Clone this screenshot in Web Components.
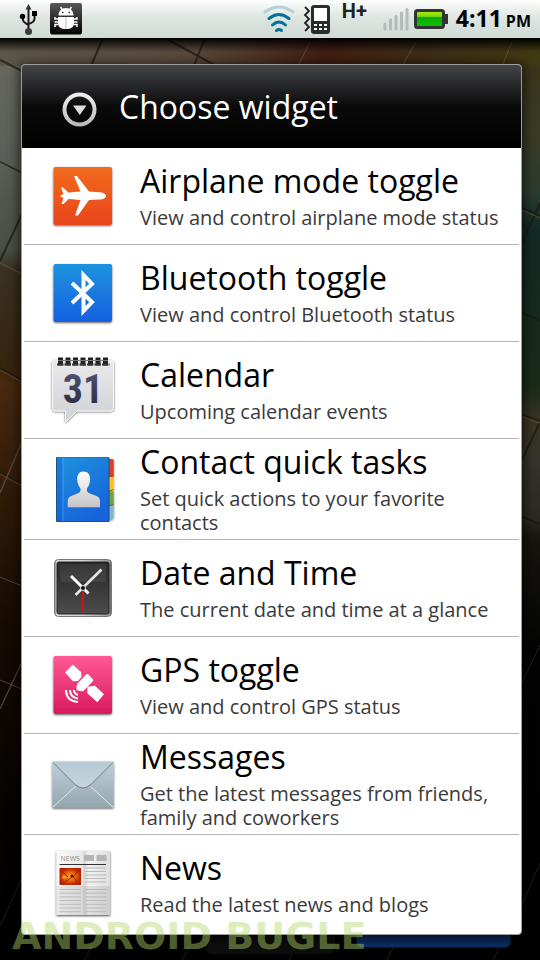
<!DOCTYPE html>
<html lang="en">
<head>
<meta charset="utf-8">
<meta name="viewport" content="width=device-width, initial-scale=1">
<title>Choose widget</title>
<style>
html{background:#000}
body{margin:0;font-family:"Open Sans","Noto Sans",sans-serif;color:#000}
</style>
</head>
<body>
<phone-screen>
  <status-bar slot="status" time="4:11" period="PM"></status-bar>
  <choice-dialog heading="Choose widget">
    <widget-row icon="airplane" label="Airplane mode toggle">View and control airplane mode status</widget-row>
    <widget-row icon="bluetooth" label="Bluetooth toggle">View and control Bluetooth status</widget-row>
    <widget-row icon="calendar" label="Calendar">Upcoming calendar events</widget-row>
    <widget-row icon="contacts" label="Contact quick tasks">Set quick actions to your favorite contacts</widget-row>
    <widget-row icon="clock" label="Date and Time">The current date and time at a glance</widget-row>
    <widget-row icon="gps" label="GPS toggle">View and control GPS status</widget-row>
    <widget-row icon="messages" label="Messages">Get the latest messages from friends, family and coworkers</widget-row>
    <widget-row icon="news" label="News">Read the latest news and blogs</widget-row>
  </choice-dialog>
  <span slot="mark">ANDROID BUGLE</span>
</phone-screen>
<script>
const tile = (a, b, body) => `<defs><linearGradient id="g" x2="0" y2="1"><stop stop-color="${a}"/><stop offset="1" stop-color="${b}"/></linearGradient><filter id="s" x="-20%" y="-20%" width="140%" height="140%"><feDropShadow dx="0" dy="1" stdDeviation="1" flood-opacity=".6"/></filter></defs><rect x="6.500" y="7" width="58.500" height="58" rx="2" fill="url(#g)" filter="url(#s)"/>${body}`;
const newsLines = () => {
  let d = '';
  for (let y = 21; y < 38; y += 3.5) d += `M38 ${y}H59`;
  for (let y = 42.5; y < 66; y += 3.7) d += `M12.500 ${y}H34M38 ${y}H59`;
  return d;
};
const ICONS = {
  airplane: tile('#f26a1b', '#e8451a', `<path fill="#fff" d="M59 36c0 2-3 3.500-7 3.500L42 40 31 55.500h-3L33.500 40l-12-1-5 5h-2l2-6-3-1.500v-1l3-1.500-2.500-6.500h2l5.500 5 12-1L27 16h3l12 15.500 10 .8c4 0 7 1.700 7 3.700z"/>`),
  bluetooth: tile('#1f93df', '#1560e0', `<path fill="none" stroke="#fff" stroke-width="4" d="M25 26l20 19-8.500 9V18L45 27 25 46"/>`),
  gps: tile('#ff5a93', '#d8195f', `<g fill="#fff"><path d="M18 23.500l7.700-8 8.300 7.500.5 5-3.500 4-5 .2zM30.500 34.500l9-9.200q1-.6 2 .3l4.300 4.600q.7 1 0 2L36.500 42q-1 .6-2 .2l-4.800-.9q-1-3 .8-6.800zM40.500 37.800l7.500-1.100 9 8.600-6.700 8-10-9z"/></g><g fill="none" stroke="#fff" stroke-width="2"><path d="M27 41c.2 3 1.500 4.500 4 4.800M23 41c.2 5 3 8 8 8.500M19 41c.2 7.500 4.500 11.500 12 12"/></g>`),
  calendar: `<defs><linearGradient id="g" x2="0" y2="1"><stop stop-color="#e9e9eb"/><stop offset="1" stop-color="#cfd1d4"/></linearGradient><linearGradient id="t" x2="0" y2="1"><stop stop-color="#55587a"/><stop offset="1" stop-color="#23263a"/></linearGradient><filter id="s" x="-20%" y="-20%" width="140%" height="140%"><feDropShadow dx="0" dy="0.500" stdDeviation=".8" flood-opacity=".65"/></filter></defs>
    <path d="M8 7h56q2.500 0 2.500 2.500v45q0 2.500-2.500 2.500H30L18.500 68V57H8q-2.500 0-2.500-2.500v-45Q5.500 7 8 7z" fill="url(#g)" stroke="#f8f8f8" filter="url(#s)"/>
    <path d="M13.500 3.500v8M21 3.500v8M28.500 3.500v8M36 3.500v8M43.500 3.500v8M51 3.500v8M58.500 3.500v8" stroke="#222" stroke-width="5"/><path d="M11 6.500h50" stroke="#777"/><path d="M10 10.500h53" stroke="#333" stroke-width="2" stroke-dasharray="6.500 1"/>
    <text x="36" y="49" text-anchor="middle" font-family="Roboto Condensed,Roboto,sans-serif" font-weight="700" font-size="40" fill="url(#t)">31</text>`,
  contacts: `<defs><linearGradient id="g" x1="0" y1="0" x2=".6" y2="1"><stop stop-color="#1f93dd"/><stop offset="1" stop-color="#1763dc"/></linearGradient><linearGradient id="p" x2="0" y2="1"><stop stop-color="#fff"/><stop offset="1" stop-color="#c4c4c6"/></linearGradient><filter id="s" x="-20%" y="-20%" width="140%" height="140%"><feDropShadow dx="0" dy="0.500" stdDeviation="1" flood-opacity=".5"/></filter></defs>
    <g filter="url(#s)"><path fill="#e63a1e" d="M60 6h5q1.700 0 1.700 2v16H60z"/><path fill="#fbc31c" d="M60 24h6.700v14.500H60z"/><path fill="#6da544" d="M60 38.500h6.700V53H60z"/><path fill="#7fb6d0" d="M60 53h6.700v12l-2 2H60z"/></g>
    <path d="M62 24l4.500-2M62 38.500l4.500-2M62 53l4.500-2" stroke="#8a5a20"/>
    <path fill="url(#g)" stroke="#1c5378" d="M9.500 4.500h52.500v64H9.500z"/><path d="M9.500 4.500h52.500" stroke="#47734d"/><path fill="#1453dd" opacity=".35" d="M10 5h5.500v63H10z"/><path d="M16 5v63" stroke="#4ab3e8" opacity=".6"/>
    <path fill="url(#p)" d="M36.500 18.500c4.500 0 6.800 3.500 6.600 8-.2 4-1.500 7-3.100 9-.5 2.500.3 4 3 5l6.500 2.500c3 1 3.500 3 3.500 6v5.300H20.700V49c0-3 .8-5 3.500-6l6.300-2.500c2.500-1 3.500-2.500 3-5-1.600-2-3.100-5-3.300-9-.2-4.500 2-8 6.300-8z"/>`,
  clock: `<defs><linearGradient id="f"><stop stop-color="#777"/><stop offset=".04" stop-color="#ddd"/><stop offset=".5" stop-color="#d5d5d5"/><stop offset=".96" stop-color="#999"/><stop offset="1" stop-color="#555"/></linearGradient><linearGradient id="g" x2="0" y2="1"><stop stop-color="#262626"/><stop offset="1" stop-color="#4c4c4c"/></linearGradient></defs>
    <rect x="7.500" y="7.500" width="57" height="57" rx="4" fill="url(#f)" stroke="#777"/><rect x="10" y="10" width="52" height="52" rx="2" fill="url(#g)" stroke="#222"/>
    <path d="M12 12h48l-2 18H14z" fill="#fff" opacity=".08"/>
    <path d="M24 24l17.500 17.500" stroke="#fff" stroke-width="3"/><path d="M54.500 17.500L28.500 43" stroke="#e8e8e8" stroke-width="2.500"/><path d="M36 36v23.500" stroke="#d80f0f" stroke-width="2"/><circle cx="36" cy="36" r="2.500" fill="#111" stroke="#ddd"/>`,
  messages: `<defs><linearGradient id="g" x2="0" y2="1"><stop stop-color="#bdcfd9"/><stop offset="1" stop-color="#94a7b1"/></linearGradient><linearGradient id="h" x2="0" y2="1"><stop stop-color="#b7cad7"/><stop offset="1" stop-color="#c6d3db"/></linearGradient><filter id="s" x="-20%" y="-20%" width="140%" height="150%"><feDropShadow dx="0" dy="1" stdDeviation="1.200" flood-opacity=".75"/></filter></defs>
    <rect x="5.500" y="13.500" width="61" height="46" fill="url(#g)" filter="url(#s)"/><path d="M6 59l23-21M66 59L43 38" stroke="#e1e9ed"/><path d="M6 14l22 22q8 7 16 0L66 14z" fill="url(#h)"/><path d="M6 14.500l22 22q8 7 16 0l22-22" fill="none" stroke="#71818c"/>`,
  news: `<defs><linearGradient id="g"><stop stop-color="#fafafa"/><stop offset=".49" stop-color="#e8e8e8"/><stop offset=".51" stop-color="#d3d3d3"/><stop offset=".6" stop-color="#f2f2f2"/><stop offset="1" stop-color="#dedede"/></linearGradient><radialGradient id="r"><stop stop-color="#ffb020"/><stop offset=".5" stop-color="#e86708"/><stop offset="1" stop-color="#b82204"/></radialGradient><filter id="s" x="-20%" y="-20%" width="140%" height="140%"><feDropShadow dx="0" dy="1" stdDeviation="1.200" flood-opacity=".7"/></filter></defs>
    <rect x="9.500" y="4" width="53.500" height="64" fill="url(#g)" filter="url(#s)"/><path d="M9.500 39H63v29H9.500z" opacity=".07"/>
    <text x="13.500" y="14" font-family="Open Sans,sans-serif" font-size="7" fill="#888">NEWS</text>
    <path fill="#b5b5b5" d="M37 8h10v6H37zM49.500 8h10v6h-10z"/><path d="M12.500 17.500H59" stroke="#333"/><path d="${newsLines()}" stroke="#b9b9b9"/>
    <path fill="url(#r)" d="M12.500 21H34v17H12.500z"/><path d="M15 24l6 6M31 24l-5 6M18 35l7-5M30 35l-4-6" stroke="#9a2404"/><circle cx="25" cy="29" r="1.500" fill="#500"/><circle cx="17" cy="30" r="1.500" fill="#ffb53a"/>`
};

class WidgetIcon extends HTMLElement {
  connectedCallback() {
    this.attachShadow({mode: 'open'}).innerHTML = `<style>:host{display:block;width:72px;height:72px;flex:none}svg{display:block;width:100%;height:100%}</style><svg viewBox="0 0 72 72" aria-hidden="true">${ICONS[this.getAttribute('name')]}</svg>`;
  }
}

class WidgetRow extends HTMLElement {
  connectedCallback() {
    this.attachShadow({mode: 'open'}).innerHTML = `<style>
      :host{display:block;border-bottom:1px solid #b4b4b4}
      :host(:last-child){border-bottom:0}
      button{box-sizing:border-box;display:flex;align-items:center;gap:21px;width:100%;min-height:96px;padding:0 12px 0 23px;border:0;background:none;font:inherit;color:inherit;text-align:left;cursor:pointer}
      .text{display:block;min-width:0;padding:8px 0 4px}
      .label{display:block;font-size:32px;line-height:30px}
      .note{display:block;margin-top:10px;font-size:20px;line-height:24px;color:#3a3a3a}
    </style><button type="button"><widget-icon name="${this.getAttribute('icon')}"></widget-icon><span class="text"><span class="label">${this.getAttribute('label')}</span><span class="note"><slot></slot></span></span></button>`;
  }
}

class ChoiceDialog extends HTMLElement {
  connectedCallback() {
    this.attachShadow({mode: 'open'}).innerHTML = `<style>
      :host{display:block;border:1px solid #9b9c9c;border-radius:4px;background:#fff;overflow:hidden;box-shadow:0 2px 12px 2px rgba(0,0,0,.65)}
      header{display:flex;align-items:center;gap:21px;height:83px;padding-left:39px;background:linear-gradient(#434447,#0a0a0a 50%,#000);color:#fff}
      header svg{flex:none;width:37px;height:37px;margin-top:6px}
      h1{margin:0;font-size:32px;line-height:40px;font-weight:400}
      .list{padding:0 2px 3px}
    </style><header><svg viewBox="0 0 37 37" aria-hidden="true"><defs><linearGradient id="g" x2="0" y2="1"><stop stop-color="#eee"/><stop offset="1" stop-color="#bbb"/></linearGradient></defs><circle cx="18.500" cy="18.500" r="15" fill="none" stroke="url(#g)" stroke-width="4"/><path fill="#ddd" d="M12 14.500h13.500l-6.700 9.500z"/></svg><h1>${this.getAttribute('heading')}</h1></header><div class="list"><slot></slot></div>`;
  }
}

class StatusBar extends HTMLElement {
  connectedCallback() {
    this.attachShadow({mode: 'open'}).innerHTML = `<style>
      :host{display:flex;align-items:center;box-sizing:border-box;height:38px;padding:0 9px 0 19px;background:linear-gradient(#fdfefd,#dfe6e2 45%,#cfdad5);color:#111}
      svg{display:block;height:38px;flex:none}
      .left,.right{display:flex;align-items:center}
      .left{gap:11px}.right{margin-left:auto}
      .vib{margin-left:8px}.net{align-self:flex-start;margin:0 16px 0 11px;font:700 20px/24px Roboto,sans-serif;color:#222}
      .bat{margin:0 8px 0 5px}
      time{font-weight:700;font-size:23px;line-height:38px;color:#000}
      small{font-size:16px;margin-left:4px}
    </style>
    <div class="left">
      <svg width="20" viewBox="0 0 20 38" aria-label="USB"><g fill="none" stroke="#1c1c1c" stroke-width="2"><path d="M9.500 8v22M4 17v3q0 2 5.500 5M15.500 15v4q0 3-6 5"/></g><path d="M6.500 9.500L9.500 4l3 5.500z" fill="#333"/><circle cx="3.500" cy="16.500" r="2.700"/><path d="M13 11h5v5h-5z"/><circle cx="9.500" cy="31.500" r="3.500" fill="#3b3b3b"/></svg>
      <svg width="32" viewBox="0 0 32 38" aria-label="Debugging"><defs><linearGradient id="k" x2="0" y2="1"><stop stop-color="#585858"/><stop offset="1"/></linearGradient></defs><rect y="3" width="32" height="31.500" rx="2" fill="url(#k)"/><g fill="#fff"><path d="M8.500 15.500c0-4.500 3-7.500 7.500-7.500s7.500 3 7.500 7.500z"/><path d="M8 17h16v6c0 4-3 6-8 6s-8-2-8-6z"/></g><path d="M10.500 7l2 3M21.500 7l-2 3M8 19H5v-2M8 22H4.500M8 24.500H5V27M24 19h3v-2M24 22h3.500M24 24.500h3V27" fill="none" stroke="#fff" stroke-width="1.500"/><path d="M16 17v12" stroke="#bbb"/><path d="M12 12.500h1.500M18.500 12.500H20" stroke="#333" stroke-width="1.500"/></svg>
    </div>
    <div class="right">
      <svg width="32" viewBox="0 0 32 38" aria-label="Wi-Fi"><g fill="none" stroke="#04719b" stroke-width="3" stroke-linecap="round"><path d="M2 12q14-10 28 0" stroke="#b5d0d8"/><path d="M6 18.500q10-8 20 0M9.500 25q6.500-6 13 0M13.500 30.500q2.500-2 5 0"/></g></svg>
      <svg class="vib" width="28" viewBox="0 0 28 38" aria-label="Vibrate"><path d="M2 7l4 4-4 4 4 4-4 4 4 4-4 4" fill="none" stroke="#222" stroke-width="1.800"/><rect x="8" y="5" width="19" height="29" rx="3" fill="#2b2b2b"/><path fill="#fff" d="M11 8h13v13H11zM11 24h3v2h-3zM16 24h3v2h-3zM21 24h3v2h-3zM11 28h3v2h-3zM16 28h3v2h-3zM21 28h3v2h-3z"/></svg>
      <span class="net">H+</span>
      <svg width="26" viewBox="0 0 26 38" aria-label="Signal"><path d="M2 29v-5M7.500 29v-9M13 29V16.500M18.500 29V13M24 29V9.500" stroke="#b3bab7" stroke-width="3" stroke-linecap="round"/></svg>
      <svg class="bat" width="34" viewBox="0 0 34 38" aria-label="Battery"><defs><linearGradient id="b" x2="0" y2="1"><stop stop-color="#b4ef10"/><stop offset=".35" stop-color="#7bd800"/><stop offset=".4" stop-color="#07a800"/><stop offset="1" stop-color="#12c400"/></linearGradient></defs><rect x="1.500" y="10.500" width="28" height="17" rx="2" fill="url(#b)" stroke="#333" stroke-width="3"/><path fill="#333" d="M31 14h3v10h-3z"/></svg>
      <time>${this.getAttribute('time')}<small>${this.getAttribute('period')}</small></time>
    </div>`;
  }
}

class TiledWallpaper extends HTMLElement {
  connectedCallback() {
    this.attachShadow({mode: 'open'}).innerHTML = `<style>:host{display:block;overflow:hidden}svg{display:block;width:100%;height:100%}</style>
    <svg viewBox="0 0 540 960" preserveAspectRatio="none" aria-hidden="true">
      <defs>
        <linearGradient id="top"><stop stop-color="#5b5648"/><stop offset=".35" stop-color="#5a4a3d"/><stop offset=".6" stop-color="#401e12"/><stop offset=".8" stop-color="#3d2e17"/><stop offset="1" stop-color="#403a12"/></linearGradient>
        <linearGradient id="left" x2="0" y2="960" gradientUnits="userSpaceOnUse"><stop offset=".07" stop-color="#66675f"/><stop offset=".16" stop-color="#5a5f58"/><stop offset=".26" stop-color="#4a4f44"/><stop offset=".28" stop-color="#3a3122"/><stop offset=".38" stop-color="#37240f"/><stop offset=".4" stop-color="#48280f"/><stop offset=".52" stop-color="#301a08"/><stop offset=".65" stop-color="#160b03"/><stop offset=".85" stop-color="#050302"/><stop offset="1" stop-color="#000"/></linearGradient>
        <linearGradient id="right" x2="0" y2="960" gradientUnits="userSpaceOnUse"><stop offset=".07" stop-color="#39351b"/><stop offset=".14" stop-color="#3a3c24"/><stop offset=".2" stop-color="#2c3b30"/><stop offset=".24" stop-color="#122a24"/><stop offset=".4" stop-color="#1a2a19"/><stop offset=".44" stop-color="#393522"/><stop offset=".48" stop-color="#34342c"/><stop offset=".54" stop-color="#2a2a22"/><stop offset=".56" stop-color="#16150f"/><stop offset=".68" stop-color="#030303"/><stop offset="1" stop-color="#000"/></linearGradient>
        <linearGradient id="btn" x2="0" y2="1"><stop stop-color="#071a44"/><stop offset="1" stop-color="#0e3067"/></linearGradient>
        <linearGradient id="dim" x2="0" y2="1"><stop/><stop offset="1" stop-opacity="0"/></linearGradient>
      </defs>
      <path d="M0 0h540v960H0z"/><path fill="url(#left)" d="M0 0h30v960H0z"/><path fill="url(#right)" d="M510 0h30v960h-30z"/><path fill="url(#top)" d="M0 38h540v28H0z"/>
      <g stroke="#1b1a10" stroke-width="2" opacity=".75"><path d="M0 60l22 11M103 38L90 68M205 38l-12 30M165 38l55 30M0 162l22 11M0 261l22-47M0 368l22 12M0 472l22 12M520 207l20 9M522 243l18-40M520 312l20 8M520 414l20 7M522 460l18-38M520 516l20 8"/></g>
      <g stroke="#79664a" stroke-width="1" opacity=".6"><path d="M0 163l22 11M0 263l22 11M0 370l22 12M0 474l22 12M0 577l22 9M0 680l22 9M310 42l-12 24M416 42l-14 24M512 42l-10 24M520 209l20 9M520 416l20 7"/></g>
      <g stroke="#66625c" stroke-width="1.500" opacity=".6"><path d="M0 493l22-51M0 709l22-47"/></g><g stroke="#4a4a48" opacity=".4"><path d="M0 926l22-48M522 683l18-38M522 905l18-42M92 946l-8 14M190 946l-8 14M295 948l-6 12M393 948l-6 12M499 948l-6 12"/></g>
      <rect x="205" y="930" width="130" height="24" rx="7" fill="#0d0d0d"/><rect x="357" y="900" width="153" height="47" rx="5" fill="url(#btn)" stroke="#07346a"/>
      <path fill="url(#dim)" d="M0 38h540v14H0z"/>
    </svg>`;
  }
}

class PhoneScreen extends HTMLElement {
  connectedCallback() {
    this.attachShadow({mode: 'open'}).innerHTML = `<style>
      :host{display:flex;flex-direction:column;position:relative;min-height:100vh;overflow:hidden}
      tiled-wallpaper{position:absolute;inset:0}
      slot[name=status],main{position:relative}
      slot[name=status]{display:block}
      main{padding:26px 18px 25px 21px}
      .mark{position:absolute;left:12px;bottom:2px;font:700 38px/44px "DejaVu Sans",sans-serif;color:rgba(180,215,105,.44);white-space:nowrap;pointer-events:none}
    </style><tiled-wallpaper></tiled-wallpaper><slot name="status"></slot><main><slot></slot></main><div class="mark"><slot name="mark"></slot></div>`;
  }
}
customElements.define('widget-icon', WidgetIcon);
customElements.define('widget-row', WidgetRow);
customElements.define('choice-dialog', ChoiceDialog);
customElements.define('status-bar', StatusBar);
customElements.define('tiled-wallpaper', TiledWallpaper);
customElements.define('phone-screen', PhoneScreen);
</script>
</body>
</html>
